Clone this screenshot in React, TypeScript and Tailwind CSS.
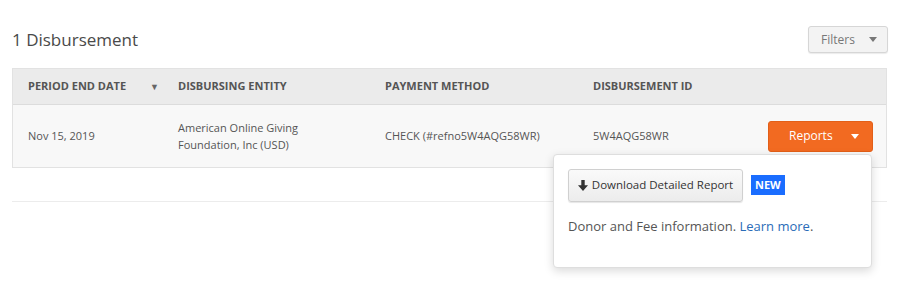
import React from "react";

const Caret = ({ className }: { className: string }) => (
  <svg width="8" height="5" viewBox="0 0 8 5" className={className}>
    <path d="M0 0h8L4 5z" fill="currentColor" />
  </svg>
);

const DownArrow = () => (
  <svg width="10" height="11" viewBox="0 0 10 11" className="text-[#333]">
    <path d="M3.3 0h3.4v5.2H10L5 11 0 5.2h3.3z" fill="currentColor" />
  </svg>
);

const App = () => {
  return (
    <div className="w-[908px] h-[283px] bg-white font-['Open_Sans',sans-serif] text-[#555] overflow-hidden">
      <div className="px-3 pt-[26px]">
        <div className="flex items-center justify-between h-[27px] mr-[8px]">
          <h1 className="text-[17px] text-[#4a4a4a]">1 Disbursement</h1>
          <button className="w-[80px] h-[27px] flex items-center justify-between pl-[12px] pr-[10px] rounded-[3px] border border-[#d6d6d6] bg-[#f3f3f3] text-[12px] text-[#777] shadow-[0_1px_1px_rgba(0,0,0,0.08)]">
            Filters
            <Caret className="text-[#777]" />
          </button>
        </div>

        <div className="mt-[15px] w-[875px] border border-[#e2e2e2]">
          <div className="grid grid-cols-[150px_207px_208px_1fr] h-[36px] items-center bg-[#ebebeb] border-b border-[#dcdcdc] text-[11px] font-bold text-[#555]">
            <div className="pl-[15px] pr-[4px] flex items-center justify-between">
              PERIOD END DATE
              <span className="text-[9px] text-[#666]">▼</span>
            </div>
            <div className="pl-[15px]">DISBURSING ENTITY</div>
            <div className="pl-[15px]">PAYMENT METHOD</div>
            <div className="pl-[15px]">DISBURSEMENT ID</div>
          </div>
          <div className="grid grid-cols-[150px_207px_208px_1fr] h-[62px] items-center bg-[#f8f8f8] text-[11px] text-[#555]">
            <div className="pl-[15px]">Nov 15, 2019</div>
            <div className="pl-[15px] leading-[17px]">
              American Online Giving
              <br />
              Foundation, Inc (USD)
            </div>
            <div className="pl-[15px]">CHECK (#refno5W4AQG58WR)</div>
            <div className="pl-[15px] flex items-center justify-between pr-[13px]">
              5W4AQG58WR
              <div className="relative">
                <button className="w-[105px] h-[31px] flex items-center pl-[20px] gap-[18px] rounded-[3px] bg-[#f26a21] border border-[#e25f18] text-white text-[12px]">
                  Reports
                  <Caret className="text-white" />
                </button>
                <div className="absolute right-[1px] top-[33px] w-[319px] h-[114px] bg-white rounded-[4px] border border-[#dedede] shadow-[0_3px_10px_rgba(0,0,0,0.15)] px-[14px] pt-[14px] z-10">
                  <div className="flex items-center gap-[8px]">
                    <button className="w-[175px] h-[33px] flex items-center justify-center gap-[4px] rounded-[3px] border border-[#d0d0d0] bg-gradient-to-b from-[#fafafa] to-[#ececec] text-[11.5px] text-[#333] shadow-[0_1px_1px_rgba(0,0,0,0.1)]">
                      <DownArrow />
                      Download Detailed Report
                    </button>
                    <span className="h-[20px] px-[4px] flex items-center bg-[#1a6dff] text-white text-[11px] font-bold">
                      NEW
                    </span>
                  </div>
                  <p className="mt-[15px] text-[13px] text-[#555]">
                    Donor and Fee information.{" "}
                    <a className="text-[#2a6cb8]">Learn more</a>.
                  </p>
                </div>
              </div>
            </div>
          </div>
        </div>

        <div className="mt-[33px] w-[875px] border-t border-[#ececec]" />
      </div>
    </div>
  );
};

export default App;
